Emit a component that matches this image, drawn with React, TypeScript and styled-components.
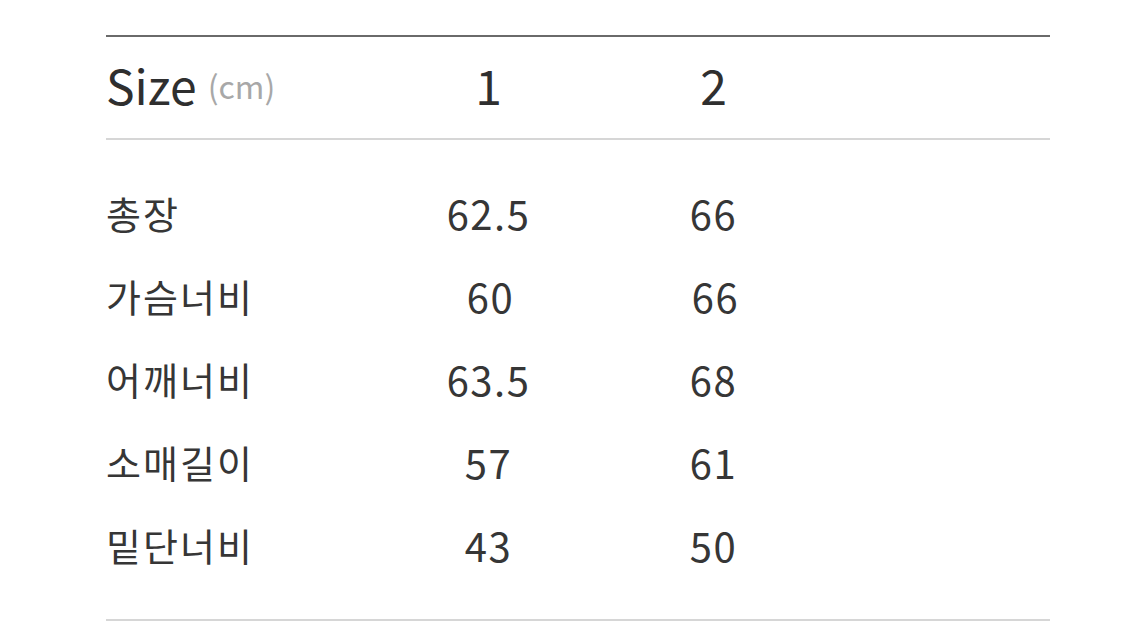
import React from 'react';
import styled, { createGlobalStyle } from 'styled-components';

const GlobalStyle = createGlobalStyle`
  html, body {
    margin: 0;
    padding: 0;
    background: #ffffff;
  }
  body {
    font-family: "Noto Sans CJK KR", "Noto Sans", sans-serif;
    color: #333333;
  }
`;

const Page = styled.div`
  width: 1125px;
  height: 636px;
  padding: 35px 0 0 106px;
  box-sizing: border-box;
`;

const Table = styled.div`
  width: 944px;
  border-top: 2px solid #6a6a6a;
  border-bottom: 2px solid #d6d6d6;
`;

const Row = styled.div`
  display: grid;
  grid-template-columns: 270px 225px 225px 1fr;
  align-items: center;
  height: 83px;
`;

const HeadRow = styled(Row)`
  height: 101px;
  border-bottom: 2px solid #d6d6d6;
`;

const Body = styled.div`
  padding: 34px 0 30px;
`;

const HeadLabel = styled.div`
  display: flex;
  align-items: center;
  gap: 11px;
  font-size: 48px;
  color: #2f2f2f;
  line-height: 1;
  padding-bottom: 8px;
`;

const Unit = styled.span`
  font-size: 32px;
  color: #a8a8a8;
  padding-top: 2px;
`;

const HeadCell = styled.div`
  text-align: center;
  font-size: 48px;
  color: #2f2f2f;
  line-height: 1;
  padding-bottom: 8px;
`;

const Label = styled.div`
  font-size: 38px;
  letter-spacing: 2px;
  color: #363636;
  line-height: 1;
  padding-bottom: 6px;
`;

const Value = styled.div<{ $nudge?: number }>`
  text-align: center;
  font-size: 40px;
  letter-spacing: 1.5px;
  color: #363636;
  line-height: 1;
  padding-bottom: 6px;
  padding-left: ${({ $nudge }) => ($nudge ? $nudge * 2 : 0)}px;
`;

interface SizeRow {
  label: string,
  values: string[],
  nudge?: number
}

const rows: SizeRow[] = [
  { label: '총장', values: ['62.5', '66'] },
  { label: '가슴너비', values: ['60', '66'], nudge: 2 },
  { label: '어깨너비', values: ['63.5', '68'] },
  { label: '소매길이', values: ['57', '61'] },
  { label: '밑단너비', values: ['43', '50'] }
];

const App = () => {
  return (
    <>
      <GlobalStyle />
      <Page>
        <Table>
          <HeadRow>
            <HeadLabel>
              Size <Unit>(cm)</Unit>
            </HeadLabel>
            <HeadCell>1</HeadCell>
            <HeadCell>2</HeadCell>
          </HeadRow>
          <Body>
            {rows.map((row) => (
              <Row key={row.label}>
                <Label>{row.label}</Label>
                {row.values.map((v, i) => (
                  <Value key={i} $nudge={row.nudge}>{v}</Value>
                ))}
              </Row>
            ))}
          </Body>
        </Table>
      </Page>
    </>
  );
}

export default App;
